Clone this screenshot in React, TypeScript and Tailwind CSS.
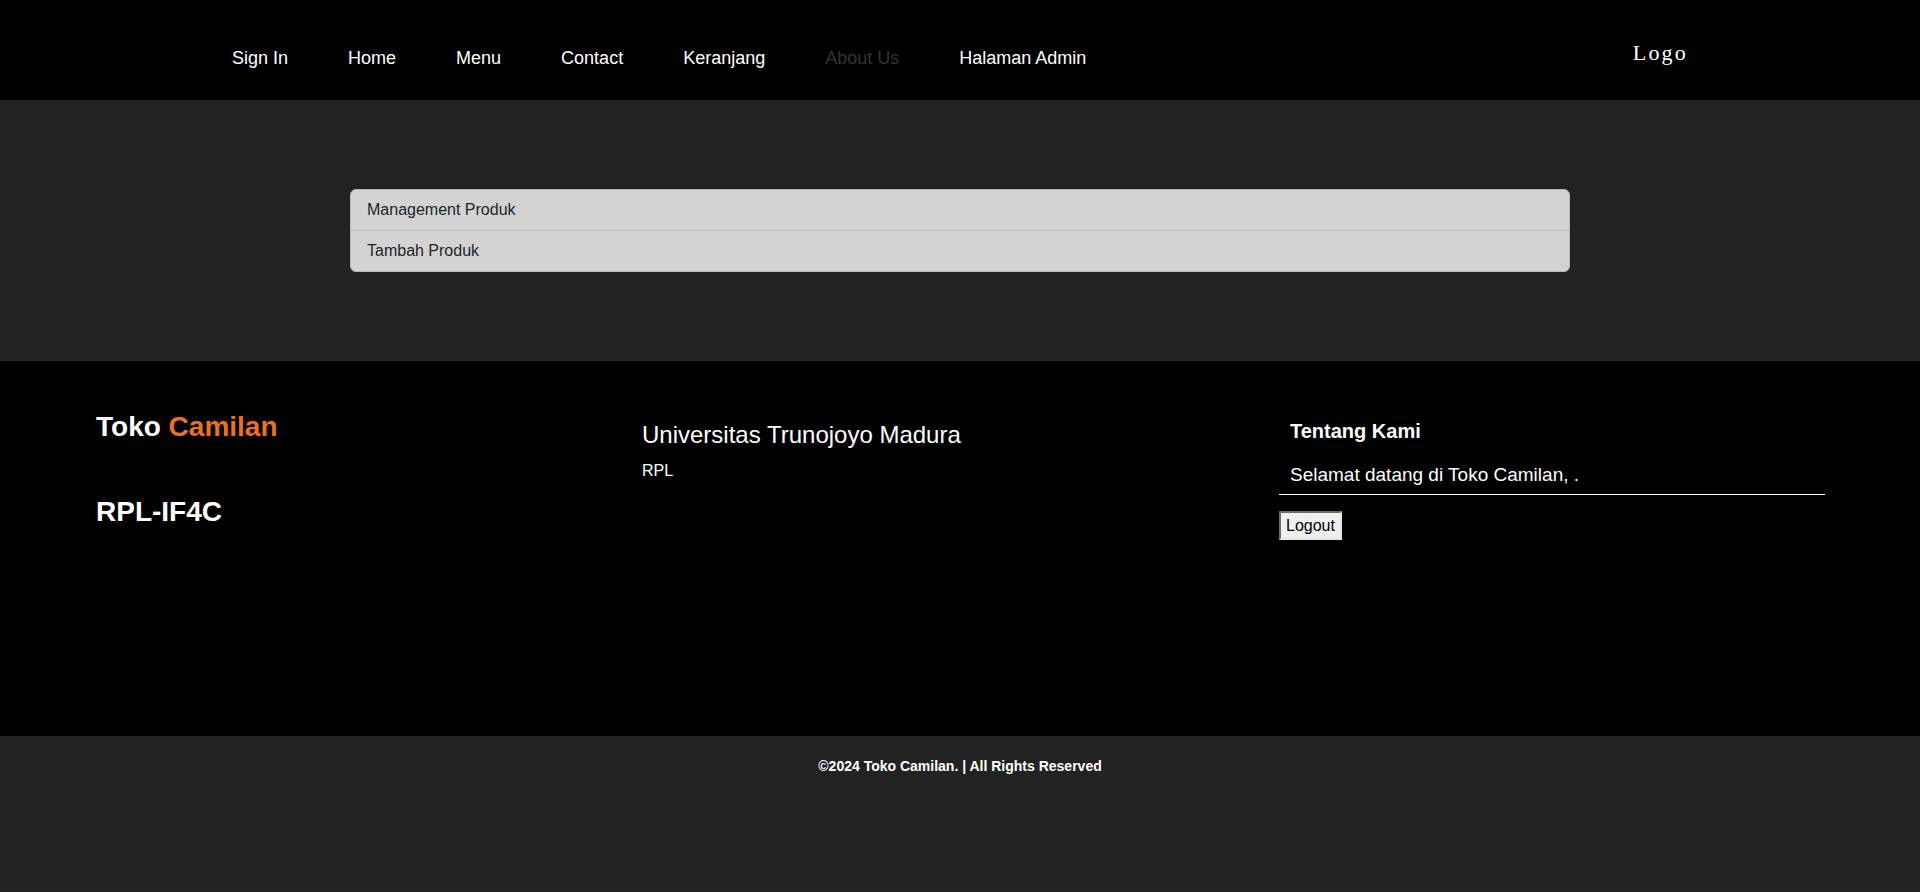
const NAV_ITEMS = [
  { label: "Sign In" },
  { label: "Home" },
  { label: "Menu" },
  { label: "Contact" },
  { label: "Keranjang" },
  { label: "About Us", active: true },
  { label: "Halaman Admin" }
];

const ADMIN_LINKS = ["Management Produk", "Tambah Produk"];

function Header() {
  return (
    <header className="flex h-[100px] justify-between bg-black px-[232px]">
      <nav className="flex gap-[60px] pt-[48px]">
        {NAV_ITEMS.map((item) => (
          <a
            key={item.label}
            href="#"
            className={`text-[18px] leading-[21px] ${
              item.active ? "text-[#333333]" : "text-white"
            }`}
          >
            {item.label}
          </a>
        ))}
      </nav>
      <div className="pt-[39px] font-[family-name:'Liberation_Serif',serif] text-[22px] leading-[27px] tracking-[2.2px] text-white">
        Logo
      </div>
    </header>
  );
}

function AdminMenu() {
  return (
    <section className="bg-[#222222] px-[350px] py-[89px]">
      <div className="overflow-hidden rounded-[6px] border border-[#b9b9b9] bg-[#d3d3d3]">
        {ADMIN_LINKS.map((link, index) => (
          <a
            key={link}
            href="#"
            className={`block px-[16px] py-[8px] text-[16px] leading-[24px] text-[#212529] ${
              index > 0 ? "border-t border-[#b9b9b9]" : ""
            }`}
          >
            {link}
          </a>
        ))}
      </div>
    </section>
  );
}

function Footer() {
  return (
    <footer className="grid h-[375px] grid-cols-[546px_637px_546px] bg-black pl-[96px] pt-[50px]">
      {/* --brand------------------------------------------ */}
      <div>
        <h3 className="text-[28px] font-bold leading-[32px] text-white">
          Toko <span className="text-[#e8731e]">Camilan</span>
        </h3>
        <h3 className="mt-[53px] text-[28px] font-bold leading-[32px] text-white">
          RPL-IF4C
        </h3>
      </div>

      {/* --kampus------------------------------------------ */}
      <div className="pt-[10px]">
        <h4 className="text-[24px] leading-[28px] text-white">
          Universitas Trunojoyo Madura
        </h4>
        <p className="mt-[10px] text-[16px] leading-[24px] text-white">RPL</p>
      </div>

      {/* --tentang kami------------------------------------------ */}
      <div className="pt-[8px]">
        <h5 className="px-[11px] text-[20px] font-bold leading-[24px] text-white">
          Tentang Kami
        </h5>
        <p className="mt-[20px] px-[11px] text-[19px] leading-[24px] text-white">
          Selamat datang di Toko Camilan, .
        </p>
        <div className="mt-[7px] h-px bg-white" />
        <button
          type="button"
          className="mt-[16px] border-2 border-b-[#e5e5e5] border-l-[#6b6b6b] border-r-[#e5e5e5] border-t-[#6b6b6b] bg-[#efefef] px-[5px] py-[2px] text-[16px] leading-[21px] text-black"
        >
          Logout
        </button>
      </div>
    </footer>
  );
}

export default function App() {
  return (
    <div className="min-h-screen bg-[#222222] font-[family-name:'Liberation_Sans',Arial,sans-serif]">
      <Header />
      <AdminMenu />
      <Footer />
      <div className="pt-[20px] text-center text-[14px] font-bold leading-[20px] text-white">
        ©2024 Toko Camilan. | All Rights Reserved
      </div>
    </div>
  );
}
